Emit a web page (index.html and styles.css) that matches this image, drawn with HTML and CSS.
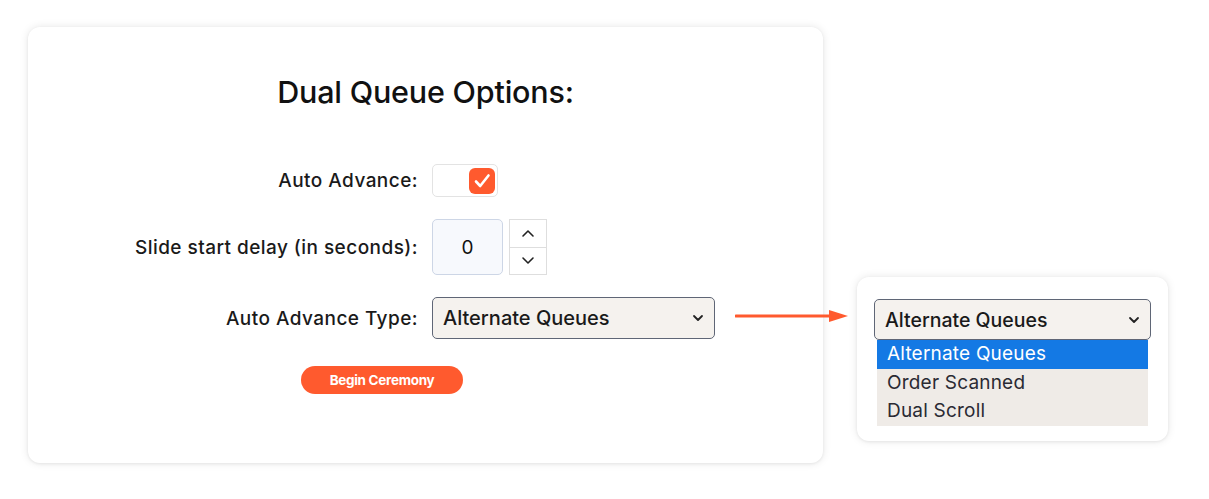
FILE: index.html
```html
<!DOCTYPE html>
<html>
<head>
<meta charset="utf-8">
<link rel="stylesheet" href="styles.css">
</head>
<body>
<div class="page">
  <div class="card">
    <h1 class="title">Dual Queue Options:</h1>
    <div class="form">
      <label class="label">Auto Advance:</label>
      <div class="control">
        <div class="checkbox">
          <span class="check">
            <svg width="26" height="26" viewBox="0 0 26 26"><path d="M7 13.5 L11.2 18 L19.5 7.5" fill="none" stroke="#fff" stroke-width="2.6" stroke-linecap="round" stroke-linejoin="round"/></svg>
          </span>
        </div>
      </div>
      <label class="label">Slide start delay (in seconds):</label>
      <div class="control number-row">
        <div class="number">0</div>
        <div class="spinner">
          <div class="spin"><svg width="14" height="9" viewBox="0 0 14 9"><path d="M2 7 L7 2 L12 7" fill="none" stroke="#222" stroke-width="1.6" stroke-linecap="round" stroke-linejoin="round"/></svg></div>
          <div class="spin"><svg width="14" height="9" viewBox="0 0 14 9"><path d="M2 2 L7 7 L12 2" fill="none" stroke="#222" stroke-width="1.6" stroke-linecap="round" stroke-linejoin="round"/></svg></div>
        </div>
      </div>
      <label class="label">Auto Advance Type:</label>
      <div class="control">
        <div class="select">
          <span>Alternate Queues</span>
          <svg width="12" height="8" viewBox="0 0 12 8"><path d="M2 2 L6 6 L10 2" fill="none" stroke="#222" stroke-width="1.8" stroke-linecap="round" stroke-linejoin="round"/></svg>
        </div>
      </div>
    </div>
    <div class="actions">
      <button class="btn">Begin Ceremony</button>
    </div>
  </div>
  <div class="panel">
    <div class="select select-sm">
      <span>Alternate Queues</span>
      <svg width="12" height="8" viewBox="0 0 12 8"><path d="M2 2 L6 6 L10 2" fill="none" stroke="#222" stroke-width="1.8" stroke-linecap="round" stroke-linejoin="round"/></svg>
    </div>
    <ul class="list">
      <li class="opt active">Alternate Queues</li>
      <li class="opt">Order Scanned</li>
      <li class="opt">Dual Scroll</li>
    </ul>
  </div>
  <svg class="arrow" width="114" height="14" viewBox="0 0 114 14"><line x1="1" y1="7" x2="96" y2="7" stroke="#ff5a2e" stroke-width="3" stroke-linecap="round"/><path d="M94 1 L113 7 L94 13 Z" fill="#ff5a2e"/></svg>
</div>
</body>
</html>
```
FILE: styles.css
```css
* { box-sizing: border-box; }
html, body { margin: 0; padding: 0; background: #fff; }
body { font-family: Inter, "Noto Sans", sans-serif; color: #1b1b1f; }
.page {
  position: relative;
  display: flex;
  align-items: flex-start;
  padding: 27px 0 0 28px;
  width: 1209px;
  height: 499px;
}
.card {
  width: 795px;
  height: 436px;
  background: #fff;
  border-radius: 12px;
  box-shadow: 0 0 8px rgba(0,0,0,0.10), 0 1px 3px rgba(0,0,0,0.06);
  padding-top: 46px;
}
.title {
  margin: 0;
  text-align: center;
  font-size: 30.5px;
  font-weight: 500;
  letter-spacing: -0.2px;
  line-height: 38px;
  color: #111;
}
.form {
  margin-top: 53px;
  display: grid;
  grid-template-columns: 390px auto;
  column-gap: 14px;
  row-gap: 22px;
  align-items: center;
}
.label {
  text-align: right;
  font-size: 19px;
  font-weight: 500;
  color: #1a1a1a;
  letter-spacing: 0.45px;
}
.control { display: flex; align-items: center; }
.checkbox {
  width: 66px;
  height: 33px;
  border: 1px solid #e3e3e3;
  border-radius: 5px;
  display: flex;
  justify-content: flex-end;
  align-items: center;
  padding-right: 2px;
}
.check {
  width: 26px;
  height: 26px;
  background: #ff5a2e;
  border-radius: 6px;
  display: flex;
}
.number-row { gap: 6px; }
.number {
  width: 71px;
  height: 56px;
  border: 1px solid #cdd6e6;
  background: #f7f9fd;
  border-radius: 5px;
  display: flex;
  align-items: center;
  justify-content: center;
  font-size: 19px;
  color: #111;
}
.spinner {
  display: flex;
  flex-direction: column;
  width: 38px;
  height: 56px;
}
.spin {
  flex: 1;
  border: 1px solid #dedede;
  display: flex;
  align-items: center;
  justify-content: center;
}
.spin + .spin { border-top: none; }
.select {
  width: 283px;
  height: 42px;
  background: #f5f2ee;
  border: 1.5px solid #5f6676;
  border-radius: 5px;
  display: flex;
  align-items: center;
  justify-content: space-between;
  padding: 0 10px 0 10px;
  font-size: 20px;
  font-weight: 500;
  color: #1a1a1a;
  letter-spacing: 0;
}
.actions {
  margin-top: 27px;
  display: flex;
  padding-left: 273px;
}
.btn {
  width: 162px;
  height: 28px;
  border: none;
  border-radius: 14px;
  background: #ff5a2e;
  color: #fff;
  font-family: Inter, sans-serif;
  font-size: 13.5px;
  font-weight: 700;
  letter-spacing: -0.3px;
  padding: 0;
}
.panel {
  margin-left: 34px;
  margin-top: 250px;
  width: 311px;
  height: 164px;
  background: #fff;
  border-radius: 12px;
  box-shadow: 0 0 8px rgba(0,0,0,0.10), 0 1px 3px rgba(0,0,0,0.06);
  padding: 22px 17px 0 17px;
}
.select-sm {
  width: 277px;
  height: 41px;
  padding: 0 10px 0 10px;
  font-size: 19.5px;
}
.list {
  list-style: none;
  margin: 0 3px;
  padding: 0;
  background: #efebe7;
}
.opt {
  height: 28.5px;
  line-height: 28.5px;
  padding-left: 10px;
  font-size: 19px;
  letter-spacing: 0.2px;
  color: #2a2a33;
}
.opt.active { background: #1479e4; color: #fff; }
.arrow {
  position: absolute;
  left: 735px;
  top: 309px;
}
```
